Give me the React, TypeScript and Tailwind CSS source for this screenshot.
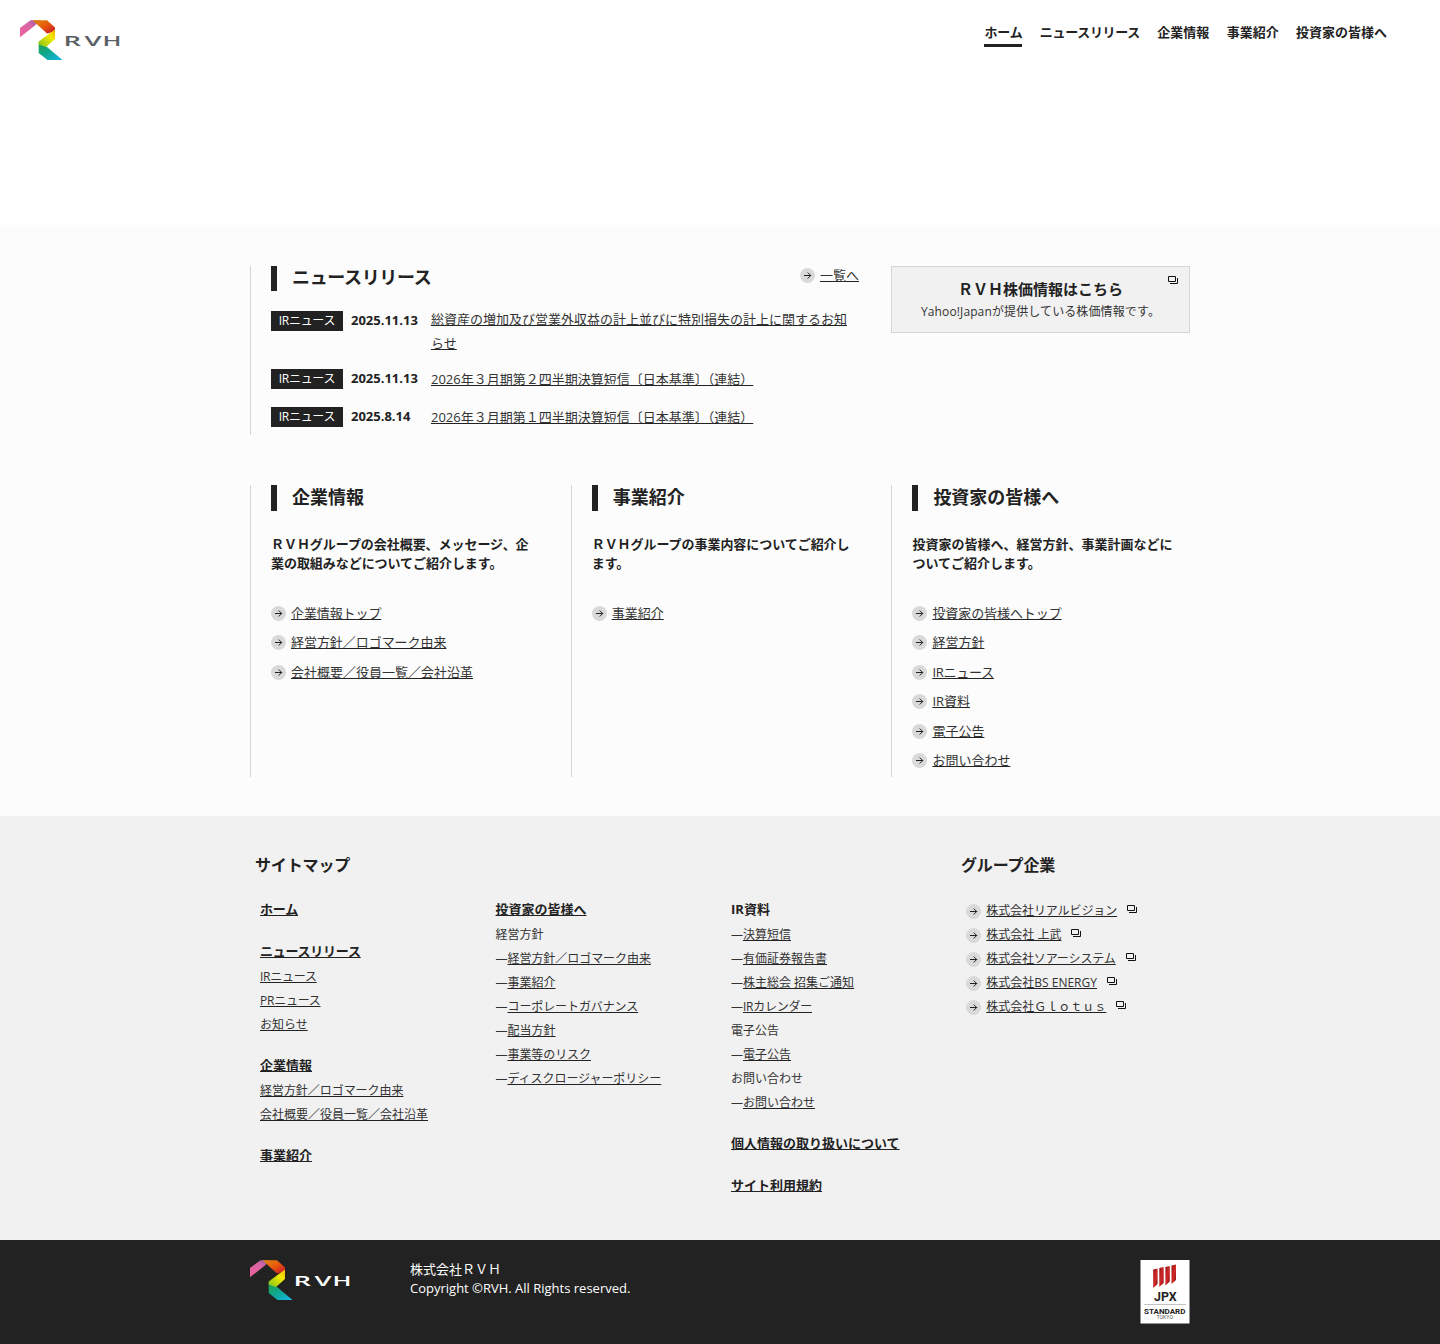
import type { ReactNode } from 'react';

interface LinkItem {
  label: string;
  track?: string;
  prefix?: boolean;
  plain?: boolean;
}

interface SitemapGroup {
  title?: LinkItem;
  items: LinkItem[];
}

const navItems: LinkItem[] = [
  { label: 'ホーム', track: 'tracking-[-0.2px]' },
  { label: 'ニュースリリース', track: 'tracking-[-0.3px]' },
  { label: '企業情報' },
  { label: '事業紹介' },
  { label: '投資家の皆様へ' },
];

const newsItems = [
  { date: '2025.11.13', title: '総資産の増加及び営業外収益の計上並びに特別損失の計上に関するお知らせ' },
  { date: '2025.11.13', title: '2026年３月期第２四半期決算短信〔日本基準〕（連結）' },
  { date: '2025.8.14', title: '2026年３月期第１四半期決算短信〔日本基準〕（連結）' },
];

const sections = [
  {
    title: '企業情報',
    text: 'ＲＶＨグループの会社概要、メッセージ、企業の取組みなどについてご紹介します。',
    track: 'tracking-[-0.05px]',
    links: [
      { label: '企業情報トップ', track: 'tracking-[-0.1px]' },
      { label: '経営方針／ロゴマーク由来', track: 'tracking-[-0.05px]' },
      { label: '会社概要／役員一覧／会社沿革' },
    ],
  },
  {
    title: '事業紹介',
    text: 'ＲＶＨグループの事業内容についてご紹介します。',
    track: 'tracking-[-0.05px]',
    links: [{ label: '事業紹介' }],
  },
  {
    title: '投資家の皆様へ',
    text: '投資家の皆様へ、経営方針、事業計画などについてご紹介します。',
    links: [
      { label: '投資家の皆様へトップ', track: 'tracking-[-0.08px]' },
      { label: '経営方針' },
      { label: 'IRニュース', track: 'tracking-[-0.25px]' },
      { label: 'IR資料' },
      { label: '電子公告' },
      { label: 'お問い合わせ' },
    ],
  },
];

const sitemap: SitemapGroup[][] = [
  [
    { title: { label: 'ホーム', track: 'tracking-[-0.2px]' }, items: [] },
    {
      title: { label: 'ニュースリリース', track: 'tracking-[-0.25px]' },
      items: [
        { label: 'IRニュース', track: 'tracking-[-0.25px]' },
        { label: 'PRニュース', track: 'tracking-[-0.25px]' },
        { label: 'お知らせ' },
      ],
    },
    {
      title: { label: '企業情報' },
      items: [
        { label: '経営方針／ロゴマーク由来', track: 'tracking-[-0.05px]' },
        { label: '会社概要／役員一覧／会社沿革' },
      ],
    },
    { title: { label: '事業紹介' }, items: [] },
  ],
  [
    {
      title: { label: '投資家の皆様へ' },
      items: [
        { label: '経営方針', plain: true },
        { label: '経営方針／ロゴマーク由来', prefix: true, track: 'tracking-[-0.05px]' },
        { label: '事業紹介', prefix: true },
        { label: 'コーポレートガバナンス', prefix: true, track: 'tracking-[-0.1px]' },
        { label: '配当方針', prefix: true },
        { label: '事業等のリスク', prefix: true, track: 'tracking-[-0.08px]' },
        { label: 'ディスクロージャーポリシー', prefix: true, track: 'tracking-[-0.05px]' },
      ],
    },
  ],
  [
    {
      title: { label: 'IR資料', plain: true },
      items: [
        { label: '決算短信', prefix: true },
        { label: '有価証券報告書', prefix: true },
        { label: '株主総会 招集ご通知', prefix: true },
        { label: 'IRカレンダー', prefix: true, track: 'tracking-[-0.25px]' },
        { label: '電子公告', plain: true },
        { label: '電子公告', prefix: true },
        { label: 'お問い合わせ', plain: true },
        { label: 'お問い合わせ', prefix: true },
      ],
    },
    { title: { label: '個人情報の取り扱いについて' }, items: [] },
    { title: { label: 'サイト利用規約' }, items: [] },
  ],
];

const companies: LinkItem[] = [
  { label: '株式会社リアルビジョン', track: 'tracking-[-0.1px]' },
  { label: '株式会社 上武' },
  { label: '株式会社ソアーシステム', track: 'tracking-[-0.12px]' },
  { label: '株式会社BS ENERGY' },
  { label: '株式会社Ｇｌｏｔｕｓ' },
];

const Logo = ({ color }: { color: string }) => (
  <svg width="101" height="40" viewBox="0 0 101 40" className="block">
    <defs>
      <linearGradient id="pink" x1="0" y1="1" x2="1" y2="0">
        <stop offset="0" stopColor="#f0609c" />
        <stop offset="0.6" stopColor="#d965a5" />
        <stop offset="1" stopColor="#8c5bab" />
      </linearGradient>
      <linearGradient id="orange" x1="0" y1="0" x2="1" y2="1">
        <stop offset="0" stopColor="#e08a10" />
        <stop offset="0.5" stopColor="#e8590c" />
        <stop offset="1" stopColor="#c8102e" />
      </linearGradient>
      <linearGradient id="yellow" x1="1" y1="0" x2="0" y2="1">
        <stop offset="0" stopColor="#f2b500" />
        <stop offset="0.35" stopColor="#f4e800" />
        <stop offset="1" stopColor="#7cc31c" />
      </linearGradient>
      <linearGradient id="teal" x1="0" y1="0" x2="0.8" y2="1">
        <stop offset="0" stopColor="#1fa04a" />
        <stop offset="0.5" stopColor="#0fa68c" />
        <stop offset="1" stopColor="#12b5d8" />
      </linearGradient>
    </defs>
    <polygon points="0,8 10.5,0.2 20,0.2 15,5.5 0,17.3" fill="url(#pink)" />
    <polygon points="12.5,0.2 27,0.2 35,7.5 35,11.5 27,13.5" fill="url(#orange)" />
    <polygon points="18.7,22.5 27,27 42.5,40 27.5,40 18.7,33" fill="url(#teal)" />
    <polygon points="35,9.5 35,19 26,27 18.7,24.5 18.7,21.5" fill="url(#yellow)" />
    <g fill={color} fontFamily="Open Sans, sans-serif" fontWeight="600" fontSize="13.5">
      <text x="43.5" y="26" textLength="17.5" lengthAdjust="spacingAndGlyphs">R</text>
      <text x="64.5" y="26" textLength="17" lengthAdjust="spacingAndGlyphs">V</text>
      <text x="82.5" y="26" textLength="19" lengthAdjust="spacingAndGlyphs">H</text>
    </g>
  </svg>
);

const ArrowIcon = () => (
  <svg width="15" height="15" viewBox="0 0 15 15" className="shrink-0">
    <circle cx="7.5" cy="7.5" r="7.5" fill="#d9d9d9" />
    <path d="M4 7.5h7M7.7 4.5l3 3l-3 3" fill="none" stroke="#222" strokeWidth="1" />
  </svg>
);

const WindowIcon = () => (
  <svg width="10" height="9" viewBox="0 0 10 9" className="shrink-0">
    <path d="M0.5 0.5h7v5h-7z" fill="none" stroke="#111" />
    <path d="M9.5 2v5.5H2" fill="none" stroke="#111" />
  </svg>
);

const Heading = ({ children }: { children: ReactNode }) => (
  <h2 className="h-[26px] border-l-[6px] border-[#222] pl-[15px] text-lg leading-6 font-bold text-[#222]">{children}</h2>
);

const SitemapRow = ({ item, bold }: { item: LinkItem; bold?: boolean }) => (
  <li className={bold ? 'h-6 text-[13px] leading-[22px] font-bold text-[#222]' : 'h-6 text-xs leading-[26px]'}>
    {item.prefix && '—'}
    <a className={`${item.plain ? '' : 'underline decoration-[#222]'} ${item.track ?? ''}`}>{item.label}</a>
  </li>
);

const JpxBadge = () => (
  <svg width="50" height="64" viewBox="0 0 50 64" className="block">
    <defs>
      <linearGradient id="jpx" x1="0" y1="0" x2="1" y2="1">
        <stop offset="0" stopColor="#8f1218" />
        <stop offset="0.5" stopColor="#d22a26" />
        <stop offset="1" stopColor="#8f1218" />
      </linearGradient>
    </defs>
    <rect x="0.5" y="0" width="49" height="63.5" fill="#fff" />
    <g fill="url(#jpx)">
      <polygon points="13.2,9.5 17.6,8.5 17.6,24 13.2,28" />
      <polygon points="19.3,8 23.7,7 23.7,23 19.3,27" />
      <polygon points="25.4,7 29.8,6 29.8,21.5 25.4,25.5" />
      <polygon points="31.5,5.5 36,4.5 36,20 31.5,24" />
    </g>
    <g fontFamily="Roboto, sans-serif" fontWeight="700" fill="#222">
      <text x="14" y="40.8" fontSize="13" textLength="22.5" lengthAdjust="spacingAndGlyphs">JPX</text>
      <rect x="4" y="44" width="42" height="0.6" fill="#999" />
      <text x="4" y="53.7" fontSize="8" textLength="41.5" lengthAdjust="spacingAndGlyphs">STANDARD</text>
      <text x="16.5" y="59.3" fontSize="5" fontWeight="400" fill="#555" textLength="16.5" lengthAdjust="spacingAndGlyphs">TOKYO</text>
    </g>
  </svg>
);

export default function App() {
  return (
    <div lang="ja" className="min-h-[1344px] bg-[#fcfcfc] font-['Open_Sans','Noto_Sans_CJK_JP',sans-serif] text-[13px] text-[#333]">
      <header className="flex h-[225px] items-start justify-between bg-white pt-5 pr-[53px] pl-5">
        <Logo color="#595f66" />
        <nav className="flex gap-[17.3px] font-bold text-[#222]">
          {navItems.map((item, i) => (
            <a
              key={item.label}
              className={`h-[27px] leading-6 ${item.track ?? ''} ${i === 0 ? 'border-b-[3px] border-[#222]' : ''}`}
            >
              {item.label}
            </a>
          ))}
        </nav>
      </header>

      <main className="mx-auto h-[591px] w-[940px] pt-[41px]">
        <div className="flex items-start justify-between">
          <section className="h-[169px] w-[609px] border-l border-[#d5d5d5] pl-5">
            <div className="flex h-[25px] items-start justify-between overflow-hidden">
              <Heading><span className="block leading-[22px] tracking-[-0.35px]">ニュースリリース</span></Heading>
              <div className="flex h-[19px] items-center gap-[5px]">
                <ArrowIcon />
                <a className="underline decoration-[#222]">一覧へ</a>
              </div>
            </div>
            <ul className="mt-4">
              {newsItems.map((news, i) => (
                <li key={news.title} className={`flex items-start ${i === 0 ? 'h-[58px]' : 'h-[38px]'}`}>
                  <span className="mt-1 h-5 w-[72px] bg-[#222] text-center text-xs leading-[19px] tracking-[-0.3px] text-white">IRニュース</span>
                  <span className="mt-1 ml-2 w-20 leading-[18px] font-bold text-[#222]">{news.date}</span>
                  <a className={`w-[424px] leading-6 underline decoration-[#222] ${i === 0 ? '' : 'mt-0.5'}`}>{news.title}</a>
                </li>
              ))}
            </ul>
          </section>

          <a className="relative block h-[67px] w-[299px] border border-[#d5d5d5] bg-[#f1f1f1] pt-[11px] text-center">
            <p className="text-[15px] leading-[22px] font-bold text-[#222]">ＲＶＨ株価情報はこちら</p>
            <p className="mt-px text-xs leading-[22px] tracking-[0.12px]">Yahoo!Japanが提供している株価情報です。</p>
            <span className="absolute top-[9px] right-[11px]"><WindowIcon /></span>
          </a>
        </div>

        <div className="mt-[50px] flex">
          {sections.map((section) => (
            <section key={section.title} className="h-[292px] w-[320.7px] shrink-0 border-l border-[#d5d5d5] pl-5">
              <Heading>{section.title}</Heading>
              <p className={`mt-6 h-[39px] w-[262px] leading-[19px] font-bold text-[#222] ${section.track ?? ''}`}>{section.text}</p>
              <ul className="mt-[24.5px]">
                {section.links.map((link: LinkItem) => (
                  <li key={link.label} className="flex h-[29.5px] items-center gap-[5px]">
                    <ArrowIcon />
                    <a className={`underline decoration-[#222] ${link.track ?? ''}`}>{link.label}</a>
                  </li>
                ))}
              </ul>
            </section>
          ))}
        </div>
      </main>

      <section className="h-[424px] bg-[#f1f1f1]">
        <div className="mx-auto flex w-[940px] pt-9">
          <div className="w-[711px] pl-[5px]">
            <h2 className="h-6 text-base leading-[26px] font-bold tracking-[-0.15px] text-[#222]">サイトマップ</h2>
            <div className="mt-[22px] flex pl-[5px]">
              {sitemap.map((column, i) => (
                <div key={i} className="flex w-[235.5px] shrink-0 flex-col gap-[18px]">
                  {column.map((group, j) => (
                    <ul key={j}>
                      {group.title && <SitemapRow item={group.title} bold />}
                      {group.items.map((item, k) => (
                        <SitemapRow key={k} item={item} />
                      ))}
                    </ul>
                  ))}
                </div>
              ))}
            </div>
          </div>
          <div>
            <h2 className="h-6 text-base leading-[26px] font-bold tracking-[-0.15px] text-[#222]">グループ企業</h2>
            <ul className="mt-[22px] pl-[5px] text-xs leading-[26px]">
              {companies.map((company) => (
                <li key={company.label} className="flex h-6 items-center">
                  <span className="mt-0.5"><ArrowIcon /></span>
                  <a className={`mt-0.5 ml-[5.3px] underline decoration-[#222] ${company.track ?? ''}`}>{company.label}</a>
                  <span className="mb-0.5 ml-[10px]"><WindowIcon /></span>
                </li>
              ))}
            </ul>
          </div>
        </div>
      </section>

      <footer className="h-[104px] bg-[#222] text-white">
        <div className="mx-auto flex w-[940px] items-start pt-5">
          <Logo color="#fff" />
          <div className="ml-[59px] leading-[19px]">
            <p>株式会社ＲＶＨ</p>
            <p>Copyright ©RVH. All Rights reserved.</p>
          </div>
          <div className="ml-auto"><JpxBadge /></div>
        </div>
      </footer>
    </div>
  );
}
